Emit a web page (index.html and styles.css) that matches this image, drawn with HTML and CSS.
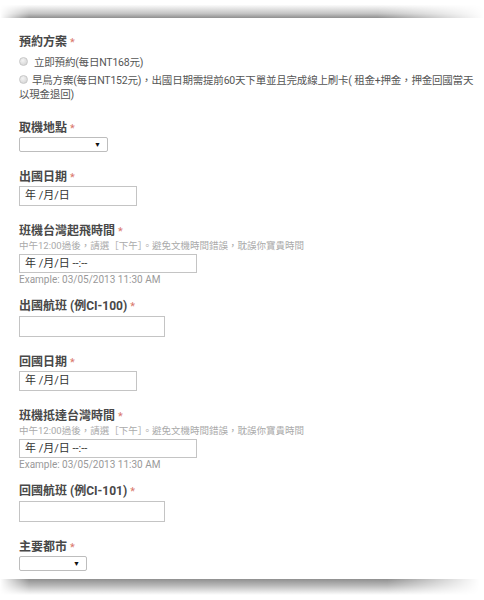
FILE: index.html
```html
<!DOCTYPE html>
<html lang="zh-Hant">
<head>
<meta charset="utf-8">
<link rel="stylesheet" href="styles.css">
</head>
<body>
<div class="shadow-top"></div>
<form class="card">
  <div class="field field-first">
    <div class="label">預約方案 <span class="req">*</span></div>
    <div class="option option-1"><span class="radio"></span>立即預約(每日NT168元)</div>
    <div class="option option-2"><span class="radio"></span>早鳥方案(每日NT152元)，出國日期需提前60天下單並且完成線上刷卡( 租金+押金，押金回國當天以現金退回)</div>
  </div>
  <div class="field">
    <div class="label">取機地點 <span class="req">*</span></div>
    <div class="select select-wide"><span class="arrow">▼</span></div>
  </div>
  <div class="field">
    <div class="label">出國日期 <span class="req">*</span></div>
    <div class="input input-date">年 /月/日</div>
  </div>
  <div class="field field-ex">
    <div class="label">班機台灣起飛時間 <span class="req">*</span></div>
    <div class="help">中午12:00過後，請選［下午］。避免文機時間錯誤，耽誤你寶貴時間</div>
    <div class="input input-dt">年 /月/日 --:--</div>
    <div class="example">Example: 03/05/2013 11:30 AM</div>
  </div>
  <div class="field">
    <div class="label">出國航班 (例CI-100) <span class="req">*</span></div>
    <div class="input input-text"></div>
  </div>
  <div class="field">
    <div class="label">回國日期 <span class="req">*</span></div>
    <div class="input input-date">年 /月/日</div>
  </div>
  <div class="field field-ex">
    <div class="label">班機抵達台灣時間 <span class="req">*</span></div>
    <div class="help">中午12:00過後，請選［下午］。避免文機時間錯誤，耽誤你寶貴時間</div>
    <div class="input input-dt">年 /月/日 --:--</div>
    <div class="example">Example: 03/05/2013 11:30 AM</div>
  </div>
  <div class="field">
    <div class="label">回國航班 (例CI-101) <span class="req">*</span></div>
    <div class="input input-text"></div>
  </div>
  <div class="field field-last">
    <div class="label">主要都市 <span class="req">*</span></div>
    <div class="select select-narrow"><span class="arrow">▼</span></div>
  </div>
</form>
<div class="shadow-bottom"></div>
</body>
</html>
```

FILE: styles.css
```css
html, body {
  margin: 0;
  padding: 0;
  background: #ffffff;
}
body {
  font-family: Roboto, Arial, "Noto Sans CJK TC", sans-serif;
  color: #444;
  width: 484px;
  height: 600px;
  overflow: hidden;
}
.shadow-top {
  height: 18px;
  background: linear-gradient(to bottom, #ffffff 25%, #c4c4c4 75%, #8f8f8f 100%);
  -webkit-mask-image: linear-gradient(to right, transparent 0, #000 6%, #000 78%, transparent 100%);
  mask-image: linear-gradient(to right, transparent 0, #000 6%, #000 78%, transparent 100%);
}
.shadow-bottom {
  height: 16px;
  background: linear-gradient(to bottom, #8f8f8f 0, #b8b8b8 40%, #ffffff 100%);
  -webkit-mask-image: linear-gradient(to right, transparent 0, #000 6%, #000 80%, transparent 99%);
  mask-image: linear-gradient(to right, transparent 0, #000 6%, #000 80%, transparent 99%);
}
.card {
  display: flex;
  flex-direction: column;
  padding: 16px 2px 8px 19px;
  box-sizing: border-box;
}
.field {
  display: flex;
  flex-direction: column;
  align-items: flex-start;
  margin-bottom: 17px;
}
.field-first { margin-bottom: 18px; }
.field-ex { margin-bottom: 11px; }
.field-last { margin-bottom: 0; }
.label {
  font-size: 12px;
  line-height: 16px;
  height: 16px;
  font-weight: bold;
  color: #484848;
  white-space: nowrap;
}
.req {
  color: #d9776b;
  font-weight: normal;
  font-size: 11px;
  line-height: 0;
}
.option {
  font-size: 10.5px;
  line-height: 14px;
  color: #555;
  letter-spacing: -0.2px;
}
.option-1 { margin-top: 6px; }
.option-2 { margin-top: 4px; }
.radio {
  display: inline-block;
  width: 7px;
  height: 7px;
  border: 1px solid #c8c8c8;
  border-radius: 50%;
  background: radial-gradient(circle at 40% 35%, #f4f4f4, #cfcfcf);
  vertical-align: 0;
  margin-right: 6px;
}
.option-2 .radio { margin-right: 4px; }
.select {
  box-sizing: border-box;
  height: 15px;
  margin-top: 1px;
  border: 1px solid #bdbdbd;
  border-radius: 2px;
  display: flex;
  justify-content: flex-end;
  align-items: center;
  padding-right: 6px;
}
.select-wide { width: 89px; }
.select-narrow { width: 68px; }
.arrow {
  font-size: 7px;
  line-height: 8px;
  color: #111;
}
.input {
  box-sizing: border-box;
  border: 1px solid #c4c4c4;
  font-size: 11px;
  line-height: 14px;
  color: #333;
  padding-left: 5px;
  display: flex;
  align-items: center;
}
.input-date {
  width: 118px;
  height: 20px;
  margin-top: 1px;
}
.input-dt {
  width: 178px;
  height: 19px;
  margin-top: 1px;
}
.input-text {
  width: 146px;
  height: 21px;
  margin-top: 2px;
}
.help {
  font-size: 9.5px;
  line-height: 14px;
  height: 14px;
  color: #aaa;
  white-space: nowrap;
}
.example {
  font-size: 10px;
  line-height: 14px;
  height: 14px;
  color: #999;
}
```
